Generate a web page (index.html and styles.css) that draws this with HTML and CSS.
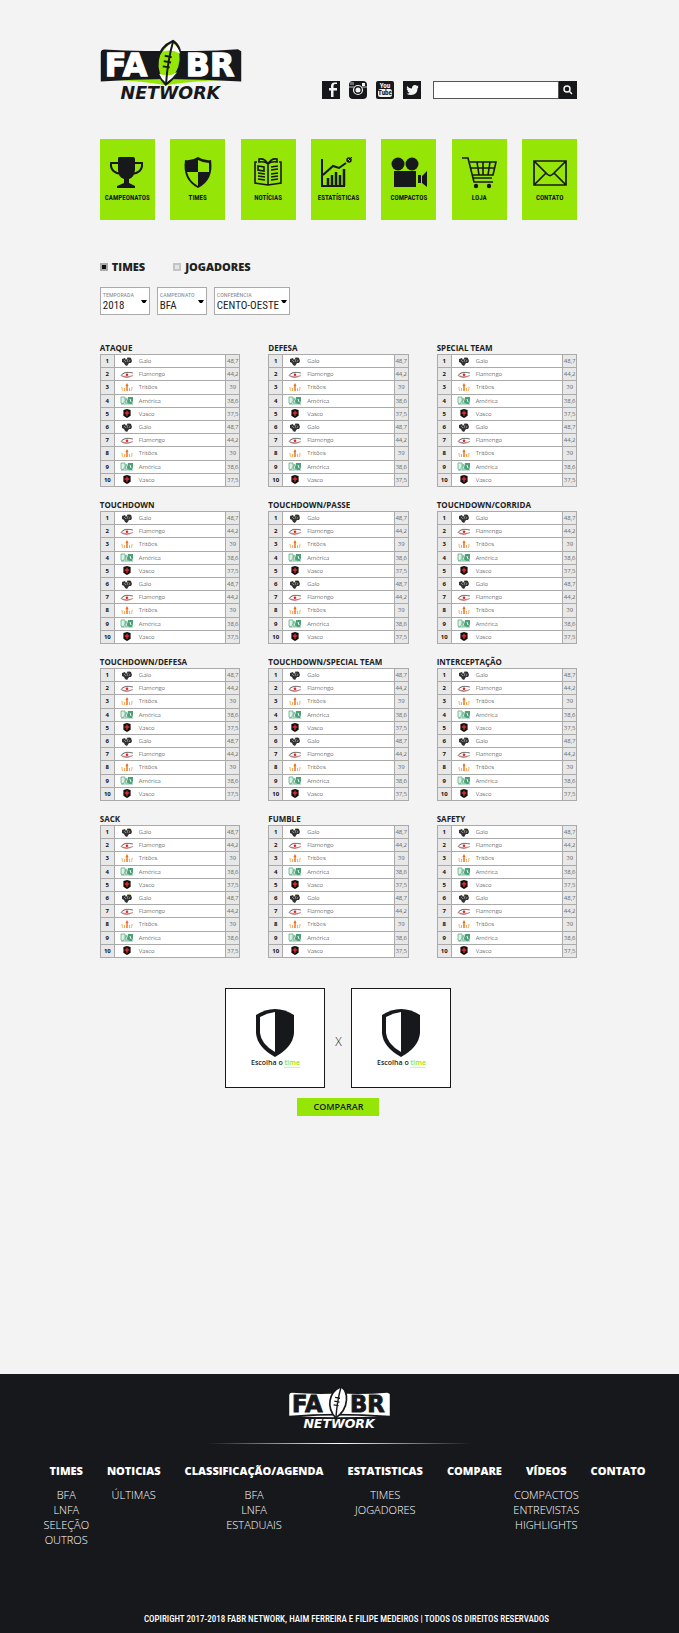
FILE: index.html
```
<!DOCTYPE html>
<html lang="pt-BR">
<head>
<meta charset="utf-8">
<meta name="viewport" content="width=device-width, initial-scale=1">
<title>FABR Network - Estatísticas</title>
<link rel="stylesheet" href="styles.css">
</head>
<body>
<svg class="sprite" aria-hidden="true">
  <symbol id="shield" viewBox="0 0 38 48">
    <path d="M19 0 Q29 0 38 6 V24 Q37 38 19 48 Q1 38 0 24 V6 Q9 0 19 0Z" fill="#17181c"/>
    <path d="M19 3 Q11 4 4 8 V24 Q5 35 19 43Z" fill="#fff"/>
  </symbol>
  <symbol id="galo" viewBox="0 0 12 9">
    <path d="M1 2 L4 1 L5 3 L7 0 L10 1 L11 4 L10 6 L8 6 L6 9 L4 8 L3 6 L1 5Z" fill="#333"/>
    <path d="M3 3 L5 5 M7 2 L6 5 M9 3 L8 5" stroke="#aaa" stroke-width=".7"/><path d="M7 0H9V1H7Z" fill="#aa7"/>
  </symbol>
  <symbol id="flamengo" viewBox="0 0 14 8">
    <path d="M1 5 Q4 0 13 2.500 Q5 1 2 4Z" fill="#444" stroke="#444" stroke-width=".4"/>
    <path d="M1 5 Q6 9 13 5 Q7 7.500 1 5Z" fill="#844" stroke="#a55" stroke-width=".4"/><circle cx="7" cy="4.200" r="1.300" fill="#e22"/>
  </symbol>
  <symbol id="tritoes" viewBox="0 0 12 9">
    <path d="M1 4 Q1 7 2 8 M11 4 Q11 7 10 8 M3.500 5 V8 M8.500 5 V8" fill="none" stroke="#f5a04c" stroke-width=".9"/>
    <path d="M6 0 L7.500 3 H6.700 V8 H5.300 V3 H4.500Z" fill="#ee6a12"/>
  </symbol>
  <symbol id="america" viewBox="0 0 14 9">
    <path d="M1 1 H5 V5 L3 8 L1 7Z M6 2 L8 7 H5Z" fill="#dff0e6" stroke="#62b08a" stroke-width=".8"/>
    <path d="M8 1 H13 V5 L12 8 H9 L7 6Z" fill="#4c9f76"/><path d="M10 3 L11 6" stroke="#fff"/><path d="M1 8 H13" stroke="#62b08a" stroke-width=".8"/>
  </symbol>
  <symbol id="vasco" viewBox="0 0 8 10">
    <path d="M0 1 L4 0 L8 1 V7 Q7 9 4 10 Q1 9 0 7Z" fill="#111"/><path d="M4 2 V7.500 M1.500 4.500 H6.500" stroke="#e22b2b" stroke-width="1.600"/>
  </symbol>
</svg>

<main class="page">
  <header class="top">
    <a class="brand" href="#" aria-label="FABR Network">
      <svg viewBox="30 28 428 182">
        <path class="logo-swoosh" d="M78 149 Q228 138 406 149 Q310 152 228 165 Q150 152 78 149Z"/>
        <path class="logo-frame" d="M31 66 Q32 57 42 57 Q120 63 206 61 L280 61 Q370 63 447 56 L457 62 V154 Q340 146 228 146 Q130 146 31 154Z"/>
        <text class="logo-letters" x="43" y="138" font-size="96">FA</text>
        <text class="logo-letters" x="289" y="138" font-size="96">BR</text>
        <path class="logo-ball" d="M250 31 C282 50 288 122 228 163 C188 120 196 55 250 31Z"/>
        <path class="logo-shine" d="M248 37 Q266 47 272 70 Q246 54 220 64 Q230 46 248 37ZM208 130 Q238 142 263 126 Q248 146 229 158 Q214 146 208 130Z"/>
        <path class="logo-lace" d="M250 34 Q234 90 229 160M225 76 L246 80M222 92 L244 96M219 108 L240 111"/>
        <text class="logo-network" x="91" y="206" font-size="53">NETWORK</text>
      </svg>
    </a>
    <div class="tools">
      <div class="social">
        <a href="#" aria-label="Facebook"><svg viewBox="0 0 18 18"><path d="M0 0H18V18H0Z" fill="#17181c"/><path d="M15 3 H13 Q11.500 3 11.500 5 V7 H15 V9.500 H11.500 V16 H9 V9.500 H7 V7 H9 V5 Q9 1.500 12.500 1.500 H15Z" fill="#f3f3f3"/></svg></a>
        <a href="#" aria-label="Instagram"><svg viewBox="0 0 18 18"><rect width="18" height="18" rx="4" fill="#17181c"/><path d="M0 6H5M13 6H18M2 1V4M4 1V4" stroke="#f3f3f3" stroke-width=".8"/><rect x="13" y="2" width="3" height="3" fill="#f3f3f3"/><circle cx="9" cy="9" r="4.500" fill="#17181c" stroke="#f3f3f3" stroke-width="1.200"/><circle cx="9" cy="9" r="2.500" fill="#f3f3f3"/></svg></a>
        <a href="#" aria-label="YouTube"><svg viewBox="0 0 18 18"><rect width="18" height="18" rx="2" fill="#17181c"/><text x="9" y="7" class="yt-text" fill="#f3f3f3">You</text><rect x="2" y="8" width="14" height="8" rx="2.500" fill="#f3f3f3"/><text x="9" y="14" class="yt-text" fill="#17181c">Tube</text></svg></a>
        <a href="#" aria-label="Twitter"><svg viewBox="0 0 18 18"><path d="M0 0H18V18H0Z" fill="#17181c"/><path d="M4 5 Q6 7.500 9 7.500 Q9 4 12 4 Q13.200 4 14 5 L15.500 4.500 L14.800 6 L15.500 6 L14.500 7.500 Q14.500 14 8 14 Q5.500 14 3.500 12.700 Q5.500 12.700 6.800 11.800 Q5 11.500 4.500 10 H5.300 Q3.600 9 3.700 7.500 L4.500 7.700 Q3.400 6.500 4 5Z" fill="#f3f3f3"/></svg></a>
      </div>
      <form class="search" role="search">
        <input type="search" aria-label="Buscar">
        <button type="button" aria-label="Pesquisar"><svg viewBox="0 0 10 10"><circle cx="4" cy="4" r="3" /><path d="M6.300 6.300 L9 9"/></svg></button>
      </form>
    </div>
  </header>

  <nav class="menu" aria-label="Principal">
    <a href="#"><svg viewBox="0 0 36 32"><path d="M9 1 Q9 0 11 0 H24 Q26 0 26 2 V13 Q25 21 20 22 V26 L26 29 V31 H8 V29 L15 26 V22 Q9 20 9 13Z" fill="#17181c"/><path d="M9 6 H2 Q1 16 13 17 M26 6 H33 Q34 16 22 17" fill="none" stroke="#17181c" stroke-width="2"/></svg><span>CAMPEONATOS</span></a>
    <a href="#"><svg viewBox="0 0 36 32"><path d="M18 0 Q24 4 31 3 Q34 23 18 31 Q2 23 5 3 Q12 4 18 0Z" fill="#17181c"/><path d="M18 3 Q23 6 29 6 L29 15 H18Z M18 15 V29 Q9 24 7 15Z" fill="#95e606"/></svg><span>TIMES</span></a>
    <a href="#"><svg viewBox="0 0 36 32"><g fill="none" stroke="#17181c" stroke-width="1.600"><path d="M7 5 H5 V26 L18 28 L31 26 V5 H29 M18 7 Q15 1 9 2 V5 Q15 4 18 7 V28 M18 7 Q21 1 27 2 V5 Q21 4 18 7"/><path d="M8 9 L14 10 V14 L8 13Z M8 16 L15 17 M8 19 L15 20 M8 22 L15 23 M21 10 L28 9 M21 13 L28 12 M21 17 L28 16 M21 20 L28 19 M21 23 L28 22"/></g></svg><span>NOTÍCIAS</span></a>
    <a href="#"><svg viewBox="0 0 36 32"><g fill="none" stroke="#17181c" stroke-width="2"><path d="M2 2 V29 H25"/><path d="M3 18 L13 9 L19 11 L26 6"/><circle cx="29" cy="3" r="2" stroke-width="1.500"/><path d="M27 5 L32 0" stroke-width="1"/><path d="M8 29 V21 M12 29 V18 M16 29 V15 M20 29 V18 M24 29 V12" stroke-width="2.500"/></g></svg><span>ESTATÍSTICAS</span></a>
    <a href="#"><svg viewBox="0 0 36 32"><g fill="#17181c"><circle cx="7" cy="7" r="6.500"/><circle cx="21" cy="7" r="6.500"/><path d="M3 14 H25 V30 H3Z M27 18 H30 V26 H27Z M31 19 L36 14 V30 L31 26Z"/></g></svg><span>COMPACTOS</span></a>
    <a href="#"><svg viewBox="0 0 36 32"><g fill="none" stroke="#17181c" stroke-width="1.600"><path d="M1 1 H7 L13 25 H32 M9 5 H35 L32 18 H12 M10 11 H34 M16 5 L18 18 M22 5 V18 M29 5 L27 18 M12 21 H31"/></g><circle cx="15" cy="29" r="2.200" fill="#17181c"/><circle cx="28" cy="29" r="2.200" fill="#17181c"/></svg><span>LOJA</span></a>
    <a href="#"><svg viewBox="0 0 36 32"><g fill="none" stroke="#17181c" stroke-width="1.700"><path d="M2 4 H34 V28 H2Z M2 4 L15 17 Q18 20 21 17 L34 4 M2 28 L14 16 M34 28 L22 16"/></g></svg><span>CONTATO</span></a>
  </nav>

  <form class="filters">
    <div class="kinds">
      <label><input type="radio" name="kind" checked>TIMES</label>
      <label><input type="radio" name="kind">JOGADORES</label>
    </div>
    <div class="selects">
      <label class="field"><span>TEMPORADA</span><select><option>2018</option></select><svg viewBox="0 0 6 4"><path d="M0 0H6L4 3H2Z"/></svg></label>
      <label class="field"><span>CAMPEONATO</span><select><option>BFA</option></select><svg viewBox="0 0 6 4"><path d="M0 0H6L4 3H2Z"/></svg></label>
      <label class="field field-wide"><span>CONFERÊNCIA</span><select><option>CENTO-OESTE</option></select><svg viewBox="0 0 6 4"><path d="M0 0H6L4 3H2Z"/></svg></label>
    </div>
  </form>

  <section class="rankings" id="rankings" aria-label="Rankings"></section>

  <section class="compare" aria-label="Comparar times">
    <div class="versus">
      <div class="pick"><svg><use href="#shield"/></svg><p>Escolha o <a href="#">time</a></p></div>
      <span class="x">X</span>
      <div class="pick"><svg><use href="#shield"/></svg><p>Escolha o <a href="#">time</a></p></div>
    </div>
    <button type="button" class="compare-btn">COMPARAR</button>
  </section>
</main>

<footer class="footer">
  <a class="footer-brand" href="#" aria-label="FABR Network">
    <svg viewBox="30 28 428 182">
      <path class="logo-frame" d="M31 66 Q32 57 42 57 Q120 63 206 61 L280 61 Q370 63 447 56 L457 62 V154 Q340 146 228 146 Q130 146 31 154Z"/>
      <path class="logo-swoosh" d="M78 158 Q228 148 406 158 Q228 162 78 158Z"/>
      <text class="logo-letters" x="43" y="138" font-size="96">FA</text>
      <text class="logo-letters" x="289" y="138" font-size="96">BR</text>
      <path class="logo-ball" d="M250 31 C282 50 288 122 228 163 C188 120 196 55 250 31Z"/>
      <path class="logo-lace" d="M250 34 Q234 90 229 160M225 76 L246 80M222 92 L244 96M219 108 L240 111"/>
      <text class="logo-network" x="91" y="206" font-size="53">NETWORK</text>
    </svg>
  </a>
  <div class="rule"></div>
  <nav class="sitemap" aria-label="Rodapé">
    <div><h2>TIMES</h2><ul><li><a href="#">BFA</a></li><li><a href="#">LNFA</a></li><li><a href="#">SELEÇÃO</a></li><li><a href="#">OUTROS</a></li></ul></div>
    <div><h2>NOTICIAS</h2><ul><li><a href="#">ÚLTIMAS</a></li></ul></div>
    <div><h2>CLASSIFICAÇÃO/AGENDA</h2><ul><li><a href="#">BFA</a></li><li><a href="#">LNFA</a></li><li><a href="#">ESTADUAIS</a></li></ul></div>
    <div><h2>ESTATISTICAS</h2><ul><li><a href="#">TIMES</a></li><li><a href="#">JOGADORES</a></li></ul></div>
    <div><h2>COMPARE</h2></div>
    <div><h2>VÍDEOS</h2><ul><li><a href="#">COMPACTOS</a></li><li><a href="#">ENTREVISTAS</a></li><li><a href="#">HIGHLIGHTS</a></li></ul></div>
    <div><h2>CONTATO</h2></div>
  </nav>
  <p class="copyright">COPIRIGHT 2017-2018 FABR NETWORK, HAIM FERREIRA E FILIPE MEDEIROS | TODOS OS DIREITOS RESERVADOS</p>
</footer>
<script src="app.js"></script>
</body>
</html>
```
FILE: styles.css
```
* { box-sizing: border-box; }

:root { --condensed: "Liberation Sans Narrow", "Roboto Condensed", Roboto, sans-serif; }

body {
  margin: 0;
  min-height: 100vh;
  display: flex;
  flex-direction: column;
  background: #f3f3f3;
  color: #222;
  font-family: "Open Sans", "Noto Sans", sans-serif;
}

a { color: inherit; text-decoration: none; }
button, input, select { font: inherit; color: inherit; margin: 0; }
svg { display: block; }
.sprite { position: absolute; width: 0; height: 0; }

.page { flex: 1; padding: 40px 15% 40px 14.7%; }

/* logo */
.brand, .footer-brand { display: block; }
.brand { --ink: #17181c; --paper: #fff; --ball: #95e606; --lace: #17181c; --word: #17181c; }
.footer-brand { --ink: #fff; --paper: #17181c; --ball: #fff; --lace: #17181c; --word: #fff; }
.brand svg, .footer-brand svg { overflow: visible; }
.brand svg { width: 142px; height: 60px; }
.footer-brand svg { width: 101px; height: 43px; }
.logo-frame { fill: var(--ink); }
.logo-swoosh, .logo-ball { fill: var(--ball); }
.logo-ball { stroke: var(--lace); stroke-width: 7px; }
.logo-shine { fill: #fff; }
.logo-lace { fill: none; stroke: var(--lace); stroke-width: 6px; }
.logo-letters { fill: var(--paper); stroke: var(--paper); stroke-width: 4px; font-family: "DejaVu Sans", sans-serif; font-weight: 700; }
.logo-network { fill: var(--word); font-family: "DejaVu Sans", sans-serif; font-weight: 700; font-style: italic; }

/* header */
.top { display: flex; justify-content: space-between; align-items: flex-end; height: 60px; }
.tools { display: flex; gap: 12px; padding-bottom: 1px; }
.social { display: flex; gap: 9px; }
.social svg { width: 18px; height: 18px; }
.yt-text { font-family: var(--condensed); font-size: 7px; font-weight: 700; text-anchor: middle; }
.search { display: flex; width: 144px; height: 18px; }
.search input { flex: 1; min-width: 0; padding: 0 4px; border: 1px solid #555; border-radius: 0; background: #fff; font-size: 10px; appearance: none; outline: 0; }
.search button { width: 18px; padding: 4px; border: 0; background: #17181c; }
.search svg { width: 10px; height: 10px; fill: none; stroke: #f3f3f3; stroke-width: 1.5; }

/* menu */
.menu { display: flex; justify-content: space-between; margin-top: 39px; }
.menu a { width: 55px; height: 81px; padding-top: 18px; display: flex; flex-direction: column; align-items: center; gap: 3px; background: #95e606; white-space: nowrap; }
.menu svg { width: 36px; height: 32px; }
.menu span { color: #17181c; font: 700 7px/12px var(--condensed); }

/* filters */
.kinds { display: flex; gap: 28px; margin-top: 39px; font-size: 11px; line-height: 16px; font-weight: 800; }
.kinds label { display: flex; align-items: center; gap: 4px; }
.kinds input { width: 8px; height: 8px; border: 2px solid #c4c4c4; background: #e4e4e4; appearance: none; }
.kinds input:checked { border-color: #aaa; background: #111; }
.selects { display: flex; align-items: flex-start; gap: 7px; margin-top: 12px; }
.field { position: relative; width: 50px; height: 28px; padding: 3px 2px 0; border: 1px solid #aaa; background: #fff; font-family: var(--condensed); }
.field-wide { width: 76px; }
.field span { display: block; color: #888; font-size: 6px; line-height: 8px; white-space: nowrap; }
.field select { display: block; width: 100%; height: 14px; padding: 0; border: 0; background: none; font-size: 11px; line-height: 14px; appearance: none; }
.field svg { position: absolute; right: 2px; top: 12px; width: 6px; height: 4px; pointer-events: none; }

/* rankings */
.rankings { display: grid; grid-template-columns: repeat(3, 1fr); gap: 11px 28px; margin-top: 26px; }
.ranking { width: 100%; height: 133px; border-collapse: collapse; table-layout: fixed; background: #fff; color: #111; font-size: 6px; line-height: 8px; font-weight: 300; }
.ranking caption { height: 13px; background: #f3f3f3; color: #222; text-align: left; font-size: 8px; line-height: 13px; font-weight: 700; white-space: nowrap; }
.ranking th, .ranking td { padding: 0; border: 1px solid #aaa; text-align: center; }
.ranking .col-rank { width: 14px; }
.ranking .col-score { width: 14px; }
.ranking th { background: #e8e8e8; font-weight: 700; }
.ranking .score { background: #e8e8e8; }
.ranking .team { padding-left: 5px; }
.team-line { display: flex; align-items: center; gap: 5px; }
.team-line svg { width: 14px; height: 9px; }

/* compare */
.compare { display: flex; flex-direction: column; align-items: center; gap: 10px; margin-top: 30px; }
.versus { display: flex; align-items: center; }
.x { width: 26px; padding-top: 8px; text-align: center; font-size: 12px; line-height: 16px; font-weight: 300; }
.pick { width: 100px; height: 100px; padding-top: 20px; display: flex; flex-direction: column; align-items: center; border: 1px solid #17181c; background: #fff; }
.pick svg { width: 38px; height: 48px; }
.pick p { margin: 0; font-size: 7px; line-height: 12px; font-weight: 600; }
.pick a { color: #95e606; border-bottom: 1px solid #d5f59b; }
.compare-btn { width: 82px; height: 18px; padding: 0; border: 0; background: #95e606; color: #17181c; font-size: 9px; line-height: 18px; font-weight: 600; }

/* footer */
.footer { display: flex; flex-direction: column; align-items: center; padding: 12px 0 8px; background: #17181c; color: #fff; }
.rule { width: 39%; height: 1px; margin-top: 14px; background: linear-gradient(90deg, transparent, #fff, transparent); }
.sitemap { display: flex; gap: 24px; margin: 19px 0 0 16px; min-height: 130px; }
.sitemap > div { display: flex; flex-direction: column; align-items: center; }
.sitemap h2 { margin: 0; font-size: 11px; line-height: 16px; font-weight: 800; white-space: nowrap; }
.sitemap ul { width: 0; margin: 8px 0 0; padding: 0; display: flex; flex-direction: column; align-items: center; list-style: none; font-size: 11px; line-height: 15px; font-weight: 300; white-space: nowrap; }
.copyright { margin: 20px 0 0 14px; font: 500 9px/12px var(--condensed); }
```
FILE: app.js
```
const titles = [
  "ATAQUE", "DEFESA", "SPECIAL TEAM",
  "TOUCHDOWN", "TOUCHDOWN/PASSE", "TOUCHDOWN/CORRIDA",
  "TOUCHDOWN/DEFESA", "TOUCHDOWN/SPECIAL TEAM", "INTERCEPTAÇÃO",
  "SACK", "FUMBLE", "SAFETY"
];
const teams = [
  ["galo", "Galo", "48,7"],
  ["flamengo", "Flamengo", "44,2"],
  ["tritoes", "Tritões", "39"],
  ["america", "América", "38,6"],
  ["vasco", "Vasco", "37,5"]
];
const rows = [...teams, ...teams].map(([icon, name, score], i) => `
  <tr>
    <th scope="row">${i + 1}</th>
    <td class="team"><div class="team-line"><svg aria-hidden="true"><use href="#${icon}"/></svg>${name}</div></td>
    <td class="score">${score}</td>
  </tr>`).join("");
document.getElementById("rankings").innerHTML = titles.map(title => `
  <table class="ranking">
    <caption>${title}</caption>
    <colgroup><col class="col-rank"><col><col class="col-score"></colgroup>
    <tbody>${rows}</tbody>
  </table>`).join("");
```
